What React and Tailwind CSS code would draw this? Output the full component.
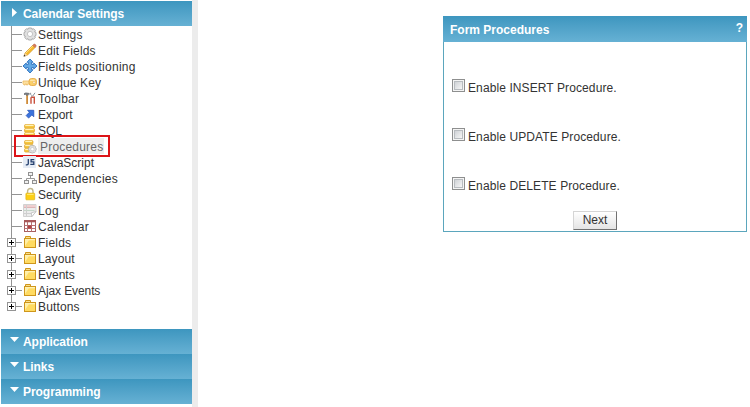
import React from "react";

const P = (props) => <path fill="none" strokeWidth="1" {...props} />;

const Gear = ({ s = 1 }) => (
  <g transform={`scale(${s})`}>
    <path
      d="M5.5 1h3l.5 1.300 1.500-.6L12.300 3.500l-.6 1.500 1.300.5v3l-1.300.5.6 1.500-1.800 1.800-1.500-.6-.5 1.300h-3L5 11.700l-1.500.6L1.700 10.500 2.300 9 1 8.500v-3L2.300 5l-.6-1.500L3.500 1.700 5 2.300Z"
      fill="#e0e0e0" stroke="#a6a6a6" strokeWidth=".9"
    />
    <circle cx="7" cy="7" r="2.600" fill="#fff" stroke="#b8b8b8" strokeWidth=".8" />
  </g>
);

const Disks = ({ w = 10 }) => (
  <g>
    {[1, 5, 9].map((y) => (
      <g key={y}>
        <rect x="1.5" y={y + 0.5} width={w} height="3.6" rx="1.200" fill="#f6c741" stroke="#dda02a" strokeWidth=".7" />
        <rect x="2.2" y={y + 0.8} width={w - 1.6} height="1.3" rx=".6" fill="#fff3b8" />
      </g>
    ))}
  </g>
);

const icons = {
  gear: <Gear />,
  pencil: (
    <g>
      <path d="M1 13.200 2 10 9.800 2.200l2.300 2.300L4.300 12.300Z" fill="#f7b92c" stroke="#c98a1c" strokeWidth=".6" />
      <path d="M3 10 10.200 2.900" stroke="#ffe07a" strokeWidth="1" />
      <path d="m9.800 2.200 1-1c.9-.7 2.900 1.200 2.200 2.200l-1 1.100Z" fill="#df7a5c" stroke="#a85a40" strokeWidth=".5" />
      <path d="M.8 13.400 2 10l2.400 2.300Z" fill="#f3d6a8" />
      <path d="m.6 13.600.6-2 1.400 1.400Z" fill="#333" />
    </g>
  ),
  move: (
    <path
      d="M7 0 10 3.200H8.600v2.200h2.200V4L14 7l-3.200 3V8.600H8.600v2.200H10L7 14 4 10.800h1.400V8.600H3.200V10L0 7l3.200-3v1.400h2.200V3.200H4Z"
      fill="#62a8e4" stroke="#3377c4" strokeWidth="1"
    />
  ),
  key: (
    <g>
      <path d="M0 6h7v3H4.700v1H3.500V9H2.200v1H1L0 8.500Z" fill="#fde0a0" stroke="#eebb62" strokeWidth=".8" />
      <rect x="6" y="3.500" width="7.500" height="7" rx="2.600" fill="#fbd06a" stroke="#e5a945" strokeWidth=".9" />
      <path d="M7.200 5.300h4.600" stroke="#ffedb8" strokeWidth="1" />
      <circle cx="11" cy="7.300" r="1.100" fill="#fff" stroke="#dfa548" strokeWidth=".5" />
    </g>
  ),
  tools: (
    <g>
      <path d="M1 4V2.200l1.800-.7 3.700.4v1.900H5.200V5H3V3.800Z" fill="#777b80" />
      <path d="M3.200 4.500H5V13H3.200Z" fill="#cf8c3a" />
      <path d="M7.600 1.800v1.500l1.200 1.200V7M12 1.800 9.800 5" stroke="#87929c" strokeWidth="1" fill="none" />
      <path d="M8 6.200v6.600M8.500 6.300h2.800v6.500" stroke="#c9503d" strokeWidth="1.400" fill="none" />
    </g>
  ),
  export: (
    <path d="M4.500 3.300h6.300v6.500L8.900 8 5.600 11.100 3.100 8.600 6.300 5.300Z" fill="#3c74dc" stroke="#1f4eb4" strokeWidth=".7" />
  ),
  disks: <Disks />,
  procedures: (
    <g>
      <Disks w={8.5} />
      <g transform="translate(4.800 5.600)"><Gear s={0.65} /></g>
    </g>
  ),
  js: (
    <g>
      <rect x="0" y="1" width="13" height="12" fill="#e6ecf5" />
      <path d="M5.300 4v4.500c0 1-.7 1.300-1.300 1.300H2.800M11.300 4.700H8.100v2.100h2.700v2.600H7.300" fill="none" stroke="#233f6e" strokeWidth="1.300" />
    </g>
  ),
  tree: (
    <g>
      <P stroke="#9a9a9a" d="M7.500 5v2.500M3.500 9V7.500h8V9" />
      <g fill="#f0f0f0" stroke="#929292" strokeWidth="1">
        <rect x="5.5" y="1.500" width="4" height="3" />
        <rect x="1.500" y="9.500" width="4" height="3" />
        <rect x="9.500" y="9.500" width="4" height="3" />
      </g>
    </g>
  ),
  lock: (
    <g>
      <path d="M4.600 6.500V4.200a2.700 2.700 0 0 1 5.400 0v2.300" fill="none" stroke="#c1b78d" strokeWidth="1.400" />
      <rect x="2.900" y="6.200" width="8.800" height="6.600" rx=".6" fill="#fdcf14" stroke="#e0b112" strokeWidth=".7" />
      <path d="M4 7.500h6.600" stroke="#ffe96e" strokeWidth="1" />
    </g>
  ),
  log: (
    <g>
      <path d="M.5 1.500h12.500v7L9 13.500H.5Z" fill="#ececec" stroke="#c9c9c9" strokeWidth=".8" />
      <path d="M1 2h11.500v2H1Z" fill="#efcfcf" />
      <P stroke="#dfb4b6" d="M1 4.500h11.500" />
      <P stroke="#c4d6c8" d="M1 7.500h10.500" />
      <P stroke="#cfcfcf" d="M1 10.500h7M3.500 2v11" />
      <path d="M13 8.500 8.800 13.700 8.300 9.800Z" fill="#fff" stroke="#b5b5b5" strokeWidth=".7" />
    </g>
  ),
  calendar: (
    <g>
      <rect x="1.500" y="1.500" width="11" height="11" fill="#fff" stroke="#a75f5f" />
      <path d="M1 1h12v2.300H1Z" fill="#a75858" />
      <P stroke="#b87474" d="M1.500 6.500h11M1.500 9.500h11M4.500 3v9.500M8.500 3v9.500" />
      <rect x="5" y="6.500" width="3.500" height="3" fill="#b04444" />
    </g>
  ),
  folder: (
    <g>
      <path d="M2.500 4V1.500h5V4" fill="#fbe08b" stroke="#cf961c" />
      <rect x="1.500" y="3.500" width="11" height="9" fill="#ffdb62" stroke="#cf961c" />
      <path d="M2 4h10v1.300H2Z" fill="#fff2b4" />
      <path d="M2 5h4L2 11Z" fill="#ffefa6" />
    </g>
  ),
};

const Icon = ({ name }) => (
  <svg className="block h-[14px] w-[14px] shrink-0 overflow-visible" viewBox="0 0 14 14">{icons[name]}</svg>
);

const items = [
  ["gear", "Settings", "tracking-[0.15px]"],
  ["pencil", "Edit Fields", "tracking-[0.15px]"],
  ["move", "Fields positioning", "tracking-[0.28px]"],
  ["key", "Unique Key", "tracking-[0.1px]"],
  ["tools", "Toolbar", "tracking-[0.28px]"],
  ["export", "Export", "tracking-[0px]"],
  ["disks", "SQL", "tracking-[0px]"],
  ["procedures", "Procedures", "tracking-[0.2px]"],
  ["js", "JavaScript", "tracking-[0px]"],
  ["tree", "Dependencies", "tracking-[0.28px]"],
  ["lock", "Security", "tracking-[0px]"],
  ["log", "Log", "tracking-[0.28px]"],
  ["calendar", "Calendar", "tracking-[0.28px]"],
  ["folder", "Fields", "tracking-[0.2px]"],
  ["folder", "Layout", "tracking-[0.1px]"],
  ["folder", "Events", "tracking-[0px]"],
  ["folder", "Ajax Events", "tracking-[-0.1px]"],
  ["folder", "Buttons", "tracking-[0.15px]"],
];

function TreeRow({ icon, label, tracking, last }) {
  const selected = icon === "procedures";
  return (
    <li className="relative flex h-4 items-center">
      <svg className="h-4 w-[22px] shrink-0" viewBox="0 0 22 16" shapeRendering="crispEdges">
        <path d={last ? "M10.5 0v8" : "M10.5 0v16"} stroke="#949494" />
        <path d="M11 8.5h10" stroke="#949494" />
        {icon === "folder" && (
          <g>
            <rect x="6.5" y="4.5" width="8" height="8" fill="#fff" stroke="#949494" />
            <path d="M8 8.5h5M10.5 6v5" stroke="#000" />
          </g>
        )}
      </svg>
      <Icon name={icon} />
      <span className={selected ? "ml-px h-4 bg-[#eeeeee] pl-[2px] pr-px text-[#666666]" : "h-4 pl-px"}>
        <span className={`block pt-px leading-4 ${tracking}`}>{label}</span>
      </span>
      {selected && <div className="absolute -top-[3px] left-[13px] h-[22px] w-[96px] border-2 border-[#dc1418]" />}
    </li>
  );
}

function Bar({ label, open }) {
  return (
    <div className="flex h-[25px] items-center bg-linear-to-b from-[#3d96bf] to-[#66b1d4] text-[12px] font-bold tracking-[-0.05px] text-white">
      <svg className="ml-[9px] mr-[4px] h-[25px] w-[9px]" viewBox="0 0 9 25">
        <path d={open ? "M2 7v9l5-4.500Z" : "M0 8h9L4.500 13Z"} fill="#fff" />
      </svg>
      <span>{label}</span>
    </div>
  );
}

export default function App() {
  return (
    <div className="flex h-[407px] w-[750px] overflow-hidden bg-white font-['Liberation_Sans',Arial,sans-serif] text-[12px] leading-4 text-[#333333]">
      <aside className="ml-px w-[191px] shrink-0 pt-px">
        <Bar label="Calendar Settings" open />
        <ul className="mb-[15px]">
          {items.map(([icon, label, tracking], i) => (
            <TreeRow key={label + i} icon={icon} label={label} tracking={tracking} last={i === items.length - 1} />
          ))}
        </ul>
        <Bar label="Application" />
        <Bar label="Links" />
        <Bar label="Programming" />
      </aside>
      <div className="w-[6px] shrink-0 bg-[#ececec]" />
      <main className="pl-[245px] pt-4">
        <section className="h-[216px] w-[304px] border border-t-0 border-[#5ba6bd]">
          <header className="-mx-px flex h-[26px] justify-between bg-linear-to-b from-[#3d96bf] to-[#66b1d4] pl-[7px] pr-[4px] font-bold text-white">
            <h1 className="pt-[6px]">Form Procedures</h1>
            <span className="pt-[4px] text-[12px]">?</span>
          </header>
          <div className="flex flex-col gap-[33px] pl-2 pt-[37px]">
            {["INSERT", "UPDATE", "DELETE"].map((name) => (
              <label key={name} className="flex h-4 gap-[3px] tracking-[0.1px]">
                <span className="flex h-[13px] w-[13px] border border-[#8e8f8f] bg-[#f4f4f4] p-px">
                  <span className="flex-1 border border-[#b8bcc0] bg-linear-to-br from-[#cfd2d6] to-[#f6f6f6]" />
                </span>
                <span className="pt-px">Enable {name} Procedure.</span>
              </label>
            ))}
          </div>
          <button className="ml-[129px] mt-[18px] block h-[19px] w-[44px] border border-[#d5d5d5] border-b-[#707070] border-r-[#707070] bg-linear-to-b from-white to-[#e4e4e4] leading-[17px]">
            Next
          </button>
        </section>
      </main>
    </div>
  );
}
